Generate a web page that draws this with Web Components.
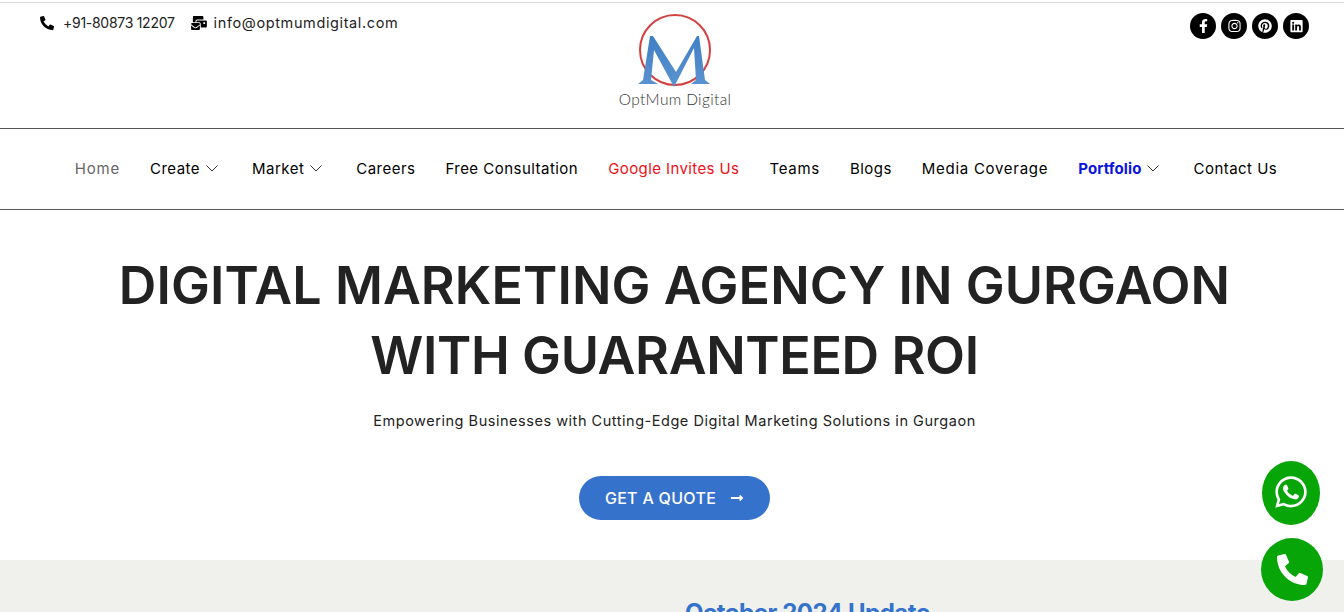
<!DOCTYPE html>
<html lang="en">
<head>
<meta charset="utf-8">
<title>OptMum Digital</title>
<style>
    html, body { margin: 0; padding: 0; height: 612px; overflow: hidden; background: #fff; }
    body { font-family: "Inter", "Liberation Sans", sans-serif; }
</style>
</head>
<body>
<site-header></site-header>
<main-nav>
    <nav-link state="muted">Home</nav-link>
    <nav-link caret>Create</nav-link>
    <nav-link caret>Market</nav-link>
    <nav-link>Careers</nav-link>
    <nav-link>Free Consultation</nav-link>
    <nav-link state="red">Google Invites Us</nav-link>
    <nav-link class="wide">Teams</nav-link>
    <nav-link>Blogs</nav-link>
    <nav-link class="wide">Media Coverage</nav-link>
    <nav-link state="blue" caret>Portfolio</nav-link>
    <nav-link>Contact Us</nav-link>
</main-nav>
<hero-section></hero-section>
<update-strip></update-strip>
<float-actions></float-actions>

<script>
const ICONS = {
    phone: ['0 0 512 512', 'M497.39 361.8l-112-48a24 24 0 0 0-28 6.9l-49.6 60.6A370.66 370.66 0 0 1 130.6 204.11l60.6-49.6a23.94 23.94 0 0 0 6.9-28l-48-112A24.16 24.16 0 0 0 122.6.61l-104 24A24 24 0 0 0 0 48c0 256.5 207.9 464 464 464a24 24 0 0 0 23.4-18.6l24-104a24.29 24.29 0 0 0-14.01-27.6z'],
    mail: ['0 0 576 512', 'M160 448c-25.6 0-51.2-22.4-64-32-64-44.8-83.2-60.8-96-70.4V480c0 17.67 14.33 32 32 32h256c17.67 0 32-14.33 32-32V345.6c-12.8 9.6-32 25.6-96 70.4-12.8 9.6-38.4 32-64 32zm128-192H32c-17.67 0-32 14.33-32 32v16c25.6 19.2 22.4 19.2 115.2 86.4 9.6 6.4 28.8 25.6 44.8 25.6s35.2-19.2 44.8-22.4c92.8-67.2 89.6-67.2 115.2-86.4V288c0-17.67-14.33-32-32-32zm256-96H224c-17.67 0-32 14.33-32 32v32h96c33.21 0 60.59 25.42 63.71 57.82l.29-.22V416h192c17.67 0 32-14.33 32-32V192c0-17.67-14.33-32-32-32zm-32 128h-64v-64h64v64zm-352-96c0-35.29 28.71-64 64-64h224V32c0-17.67-14.33-32-32-32H96C78.33 0 64 14.33 64 32v192h96v-32z'],
    facebook: ['0 0 320 512', 'M279.14 288l14.22-92.66h-88.91v-60.13c0-25.35 12.42-50.06 52.24-50.06h40.42V6.26S260.43 0 225.36 0c-73.22 0-121.08 44.38-121.08 124.72v70.62H22.89V288h81.39v224h100.17V288z'],
    instagram: ['0 0 448 512', 'M224.1 141c-63.6 0-114.9 51.3-114.9 114.9s51.3 114.9 114.9 114.9S339 319.5 339 255.9 287.7 141 224.1 141zm0 189.6c-41.1 0-74.7-33.5-74.7-74.7s33.5-74.7 74.7-74.7 74.7 33.5 74.7 74.7-33.6 74.7-74.7 74.7zm146.4-194.3c0 14.9-12 26.8-26.8 26.8-14.9 0-26.8-12-26.8-26.8s12-26.8 26.8-26.8 26.8 12 26.8 26.8zm76.1 27.2c-1.7-35.9-9.9-67.7-36.2-93.9-26.2-26.2-58-34.4-93.9-36.2-37-2.1-147.9-2.1-184.9 0-35.8 1.7-67.6 9.9-93.9 36.1s-34.4 58-36.2 93.9c-2.1 37-2.1 147.9 0 184.9 1.7 35.9 9.9 67.7 36.2 93.9s58 34.4 93.9 36.2c37 2.1 147.9 2.1 184.9 0 35.9-1.7 67.7-9.9 93.9-36.2 26.2-26.2 34.4-58 36.2-93.9 2.1-37 2.1-147.8 0-184.8zM398.8 388c-7.8 19.6-22.9 34.7-42.6 42.6-29.5 11.7-99.5 9-132.1 9s-102.7 2.6-132.1-9c-19.6-7.8-34.7-22.9-42.6-42.6-11.7-29.5-9-99.5-9-132.1s-2.6-102.7 9-132.1c7.8-19.6 22.9-34.7 42.6-42.6 29.5-11.7 99.5-9 132.1-9s102.7-2.6 132.1 9c19.6 7.8 34.7 22.9 42.6 42.6 11.7 29.5 9 99.5 9 132.1s2.7 102.7-9 132.1z'],
    pinterest: ['0 0 496 512', 'M496 256c0 137-111 248-248 248-25.6 0-50.2-3.9-73.4-11.1 10.1-16.5 25.2-43.5 30.8-65 3-11.6 15.4-59 15.4-59 8.1 15.4 31.7 28.5 56.8 28.5 74.8 0 128.7-68.8 128.7-154.3 0-81.9-66.9-143.2-152.9-143.2-107 0-163.9 71.8-163.9 150.1 0 36.4 19.4 81.7 50.3 96.1 4.7 2.2 7.2 1.2 8.3-3.3.8-3.4 5-20.3 6.9-28.1.6-2.5.3-4.7-1.7-7.1-10.1-12.5-18.3-35.3-18.3-56.6 0-54.7 41.4-107.6 112-107.6 60.9 0 103.6 41.5 103.6 100.9 0 67.1-33.9 113.6-78 113.6-24.3 0-42.6-20.1-36.7-44.8 7-29.5 20.5-61.3 20.5-82.6 0-19-10.2-34.9-31.4-34.9-24.9 0-44.9 25.7-44.9 60.2 0 22 7.4 36.8 7.4 36.8s-24.5 103.8-29 123.2c-5 21.4-3 51.6-.9 71.2C65.4 450.9 0 361.1 0 256 0 119 111 8 248 8s248 111 248 248z'],
    linkedin: ['0 0 448 512', 'M416 32H31.9C14.3 32 0 46.5 0 64.3v383.4C0 465.5 14.3 480 31.9 480H416c17.6 0 32-14.5 32-32.3V64.3c0-17.8-14.4-32.3-32-32.3zM135.4 416H69V202.2h66.5V416zm-33.2-243c-21.3 0-38.5-17.3-38.5-38.5S80.9 96 102.2 96c21.2 0 38.5 17.3 38.5 38.5 0 21.3-17.2 38.5-38.5 38.5zm282.1 243h-66.4V312c0-24.8-.5-56.7-34.5-56.7-34.6 0-39.9 27-39.9 54.9V416h-66.4V202.2h63.7v29.2h.9c8.9-16.8 30.6-34.5 62.9-34.5 67.2 0 79.7 44.3 79.7 101.9V416z'],
    whatsapp: ['0 0 448 512', 'M380.9 97.1C339 55.1 283.2 32 223.9 32c-122.4 0-222 99.6-222 222 0 39.1 10.2 77.3 29.6 111L0 480l117.7-30.9c32.4 17.7 68.9 27 106.1 27h.1c122.3 0 224.1-99.6 224.1-222 0-59.3-25.2-115-67.1-157zm-157 341.6c-33.2 0-65.7-8.9-94-25.7l-6.7-4-69.8 18.3L72 359.2l-4.4-7c-18.5-29.4-28.2-63.3-28.2-98.2 0-101.7 82.8-184.5 184.6-184.5 49.3 0 95.6 19.2 130.4 54.1 34.8 34.9 56.2 81.2 56.1 130.5 0 101.8-84.9 184.6-186.6 184.6zm101.2-138.2c-5.5-2.8-32.8-16.2-37.9-18-5.1-1.9-8.8-2.8-12.5 2.8-3.7 5.6-14.3 18-17.6 21.8-3.2 3.7-6.5 4.2-12 1.4-32.6-16.3-54-29.1-75.5-66-5.7-9.8 5.7-9.1 16.3-30.3 1.8-3.7.9-6.9-.5-9.7-1.4-2.8-12.5-30.1-17.1-41.2-4.5-10.8-9.1-9.3-12.5-9.5-3.2-.2-6.9-.2-10.6-.2-3.7 0-9.7 1.4-14.8 6.9-5.1 5.6-19.4 19-19.4 46.3 0 27.3 19.9 53.7 22.6 57.4 2.8 3.7 39.1 59.7 94.8 83.8 35.2 15.2 49 16.5 66.6 13.9 10.7-1.6 32.8-13.4 37.4-26.4 4.6-13 4.6-24.1 3.2-26.4-1.3-2.5-5-3.9-10.5-6.6z'],
    arrow: ['0 0 448 512', 'M313.941 216H12c-6.627 0-12 5.373-12 12v56c0 6.627 5.373 12 12 12h301.941v46.059c0 21.382 25.851 32.09 40.971 16.971l86.059-86.059c9.373-9.373 9.373-24.569 0-33.941l-86.059-86.059c-15.119-15.119-40.971-4.411-40.971 16.971V216z']
};

function icon(name, w, h) {
    const [box, d] = ICONS[name];
    return `<svg width="${w}" height="${h}" viewBox="${box}" fill="currentColor" aria-hidden="true"><path d="${d}"/></svg>`;
}

class SiteHeader extends HTMLElement {
    constructor() {
        super();
        this.attachShadow({ mode: 'open' });
        this.shadowRoot.innerHTML = `
            <style>
                :host {
                    display: grid;
                    grid-template-columns: 1fr auto 1fr;
                    box-sizing: border-box;
                    height: 127px;
                    margin-top: 2px;
                    padding: 0 35px 0 40px;
                    border-top: 1px solid #dcdcdc;
                    border-bottom: 1px solid #555;
                    color: #111;
                }
                .contacts {
                    display: flex;
                    align-items: center;
                    height: 39px;
                    color: #222;
                }
                .contacts span { margin-left: 9px; white-space: nowrap; }
                .contacts svg { color: #000; flex: none; }
                .contacts svg:nth-of-type(2) { margin-left: 16px; }
                .tel { font-size: 14px; letter-spacing: -.28px; }
                .mail { margin-left: 7px !important; font-size: 14.5px; letter-spacing: .62px; }
                .brand {
                    display: flex;
                    flex-direction: column;
                    align-items: center;
                    padding: 10px 0 0 1px;
                }
                .brand b {
                    font: 300 15.5px "Lato", sans-serif;
                    color: #333;
                    letter-spacing: .35px;
                    margin-top: -1px;
                    white-space: nowrap;
                }
                .social {
                    display: flex;
                    justify-content: flex-end;
                    gap: 5px;
                    padding-top: 10px;
                }
                .social a {
                    display: flex;
                    align-items: center;
                    justify-content: center;
                    width: 26px;
                    height: 26px;
                    border-radius: 50%;
                    background: #000;
                    color: #fff;
                }
            </style>
            <div class="contacts">
                ${icon('phone', 14, 14)}<span class="tel">+91-80873 12207</span>
                ${icon('mail', 16, 14)}<span class="mail">info@optmumdigital.com</span>
            </div>
            <div class="brand">
                <svg width="82" height="78" viewBox="0 0 82 78" aria-label="OptMum Digital logo">
                    <defs>
                        <linearGradient id="m" x1="0" y1="0" x2="0" y2="1">
                            <stop offset="0" stop-color="#3f7fc4"/>
                            <stop offset="1" stop-color="#5b93d0"/>
                        </linearGradient>
                    </defs>
                    <circle cx="41" cy="37" r="35" fill="none" stroke="#d2403f" stroke-width="2"/>
                    <path fill="url(#m)" d="M16 23 L9 67 L4 71 H24 L17 67 L20 37 L40 74 L60 35 L62 67 L57 71 H76 L71 67 L65 23 H63 L42 59 L19 23 Z"/>
                </svg>
                <b>OptMum Digital</b>
            </div>
            <div class="social">
                <a>${icon('facebook', 9, 14)}</a>
                <a>${icon('instagram', 13, 14)}</a>
                <a>${icon('pinterest', 14, 14)}</a>
                <a>${icon('linkedin', 13, 14)}</a>
            </div>
        `;
    }
}
customElements.define('site-header', SiteHeader);

class MainNav extends HTMLElement {
    constructor() {
        super();
        this.attachShadow({ mode: 'open' });
        this.shadowRoot.innerHTML = `
            <style>
                :host {
                    display: flex;
                    align-items: center;
                    justify-content: center;
                    gap: 30px;
                    box-sizing: border-box;
                    height: 81px;
                    padding: 0 0 2px 8px;
                    border-bottom: 1px solid #555;
                }
            </style>
            <slot></slot>
        `;
    }
}
customElements.define('main-nav', MainNav);

class NavLink extends HTMLElement {
    constructor() {
        super();
        this.attachShadow({ mode: 'open' });
        const caret = this.hasAttribute('caret')
            ? '<svg width="12" height="7" viewBox="0 0 12 7" fill="none" stroke="currentColor" stroke-width="1"><path d="M.5 .5 L6 6 L11.5 .5"/></svg>'
            : '';
        this.shadowRoot.innerHTML = `
            <style>
                :host {
                    display: inline-flex;
                    align-items: center;
                    gap: 6px;
                    font-size: 15px;
                    letter-spacing: .47px;
                    color: #000;
                    white-space: nowrap;
                }
                :host([caret]) { margin-right: 4px; }
                :host(.wide) { letter-spacing: .72px; }
                :host([state="muted"]) { color: #666; letter-spacing: .8px; }
                :host([state="red"]) { color: #f01018; letter-spacing: .4px; }
                :host([state="blue"]) { color: #0a14e0; font-weight: 700; letter-spacing: .1px; }
                svg { color: #333; }
            </style>
            <slot></slot>${caret}
        `;
    }
}
customElements.define('nav-link', NavLink);

class HeroSection extends HTMLElement {
    constructor() {
        super();
        this.attachShadow({ mode: 'open' });
        this.shadowRoot.innerHTML = `
            <style>
                :host {
                    display: flex;
                    flex-direction: column;
                    align-items: center;
                    box-sizing: border-box;
                    height: 350px;
                    padding: 41px 0 0 5px;
                    color: #222;
                }
                h1 {
                    margin: 0;
                    font-size: 52px;
                    font-weight: 600;
                    line-height: 70px;
                    letter-spacing: .08px;
                    text-align: center;
                    white-space: nowrap;
                }
                .second { letter-spacing: -.35px; }
                p {
                    margin: 19px 0 0;
                    font-size: 14.5px;
                    line-height: 22px;
                    letter-spacing: .53px;
                }
                a {
                    display: flex;
                    align-items: center;
                    justify-content: center;
                    gap: 14px;
                    width: 191px;
                    height: 44px;
                    margin-top: 44px;
                    border-radius: 22px;
                    background: #3572cc;
                    color: #fff;
                    font-size: 16px;
                    font-weight: 500;
                    letter-spacing: .3px;
                }
            </style>
            <h1>DIGITAL MARKETING AGENCY IN GURGAON<br><span class="second">WITH GUARANTEED ROI</span></h1>
            <p>Empowering Businesses with Cutting-Edge Digital Marketing Solutions in Gurgaon</p>
            <a>GET A QUOTE ${icon('arrow', 14, 14)}</a>
        `;
    }
}
customElements.define('hero-section', HeroSection);

class UpdateStrip extends HTMLElement {
    constructor() {
        super();
        this.attachShadow({ mode: 'open' });
        this.shadowRoot.innerHTML = `
            <style>
                :host {
                    display: grid;
                    grid-template-columns: 685px 1fr;
                    height: 52px;
                    overflow: hidden;
                    background: #f0f0ec;
                }
                h2 {
                    grid-column: 2;
                    margin: 38px 0 0;
                    font-size: 24px;
                    line-height: 30px;
                    font-weight: 700;
                    letter-spacing: -.45px;
                    color: #3572cc;
                }
            </style>
            <h2>October 2024 Update</h2>
        `;
    }
}
customElements.define('update-strip', UpdateStrip);

class FloatActions extends HTMLElement {
    constructor() {
        super();
        this.attachShadow({ mode: 'open' });
        this.shadowRoot.innerHTML = `
            <style>
                :host {
                    position: fixed;
                    left: 1261px;
                    top: 461px;
                    display: flex;
                    flex-direction: column;
                    align-items: center;
                    width: 62px;
                    gap: 13px;
                }
                a {
                    display: flex;
                    align-items: center;
                    justify-content: center;
                    background: #08a508;
                    color: #fff;
                    border-radius: 50%;
                }
                .wa { width: 58px; height: 64px; margin-right: 2px; }
                .wa svg { margin-top: -2px; }
                .call { width: 62px; height: 63px; }
            </style>
            <a class="wa">${icon('whatsapp', 32, 36)}</a>
            <a class="call">${icon('phone', 31, 31)}</a>
        `;
    }
}
customElements.define('float-actions', FloatActions);
</script>
</body>
</html>
